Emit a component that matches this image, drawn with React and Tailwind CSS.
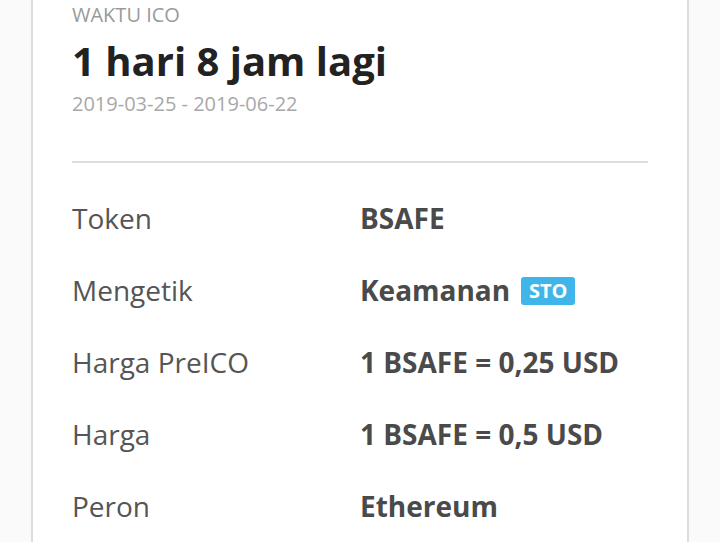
const rows = [
  { label: "Token", value: "BSAFE" },
  { label: "Mengetik", value: "Keamanan", badge: "STO" },
  { label: "Harga PreICO", value: "1 BSAFE = 0,25 USD" },
  { label: "Harga", value: "1 BSAFE = 0,5 USD" },
  { label: "Peron", value: "Ethereum" },
];

export default function App() {
  return (
    <div className="h-[542px] overflow-hidden bg-[#fafafa] px-[31px] font-['Open_Sans',sans-serif]">
      <div className="h-full border-x-2 border-[#dddddd] bg-white px-[39px] pt-[3px]">
        <p className="text-[20px] leading-[24px] uppercase text-[#9a9a9a]">Waktu ICO</p>
        <h1 className="mt-[10px] text-[40px] leading-[48px] font-bold text-[#222222]">1 hari 8 jam lagi</h1>
        <p className="mt-[7px] text-[20px] leading-[24px] text-[#a8a8a8]">2019-03-25 - 2019-06-22</p>

        <div className="mt-[45px] h-[2px] bg-[#dddddd]" />

        <div className="mt-[19px]">
          {rows.map((row) => (
            <div key={row.label} className="grid grid-cols-2 h-[72px] items-center">
              <span className="text-[28px] leading-[72px] text-[#555555]">{row.label}</span>
              <span className="flex items-center gap-[11px] text-[28px] leading-[72px] font-bold text-[#4a4a4a]">
                {row.value}
                {row.badge && (
                  <span className="mt-[1px] flex h-[28px] w-[54px] items-center justify-center rounded-[3px] bg-[#3fb5e9] text-[20px] leading-none font-bold text-white">
                    {row.badge}
                  </span>
                )}
              </span>
            </div>
          ))}
        </div>
      </div>
    </div>
  );
}
